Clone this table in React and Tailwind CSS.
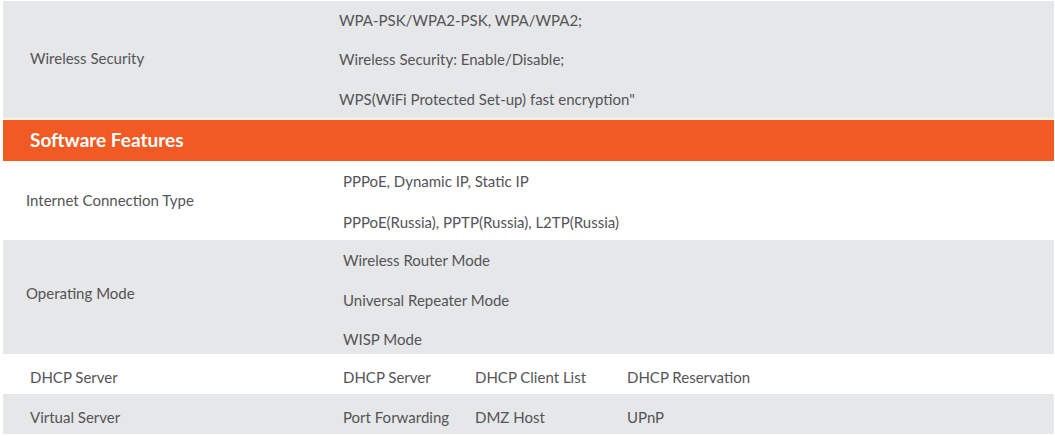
import React from "react";

function Row({ bg, label, labelPad = "pl-[27px]", valuePad = "pl-0", lines, h }) {
    return (
        <div className={`flex ${bg}`}>
            <div className={`w-[336px] shrink-0 flex items-center whitespace-nowrap ${labelPad}`}>
                {label}
            </div>
            <div className={`flex flex-col ${valuePad}`}>
                {lines.map((l, i) => (
                    <div key={i} className={`flex items-center whitespace-nowrap ${h[i]}`}>
                        {l}
                    </div>
                ))}
            </div>
        </div>
    );
}

export default function App() {
    return (
        <div className="w-[1055px] h-[436px] bg-white pt-px pl-[3px] pr-px text-[15px] text-[#545457] font-['Lato','Open_Sans',sans-serif]">
            {/* Hardware: wireless security */}
            <Row
                bg="bg-[#e6e7e8]"
                label="Wireless Security"
                labelPad="pl-[27px] pb-[2px]"
                lines={[
                    "WPA-PSK/WPA2-PSK, WPA/WPA2;",
                    "Wireless Security: Enable/Disable;",
                    'WPS(WiFi Protected Set-up) fast encryption"',
                ]}
                h={["h-[39px]", "h-[39px]", "h-[39px] pt-[2px]"]}
            />
            <div className="h-[2px] bg-[#fbf4e6]"></div>

            {/* Section header */}
            <div className="h-[41px] bg-[#f15a22] flex items-center pl-[27px] text-white font-bold text-[19px]">
                Software Features
            </div>

            <Row
                bg="bg-white"
                label="Internet Connection Type"
                labelPad="pl-[23px]"
                valuePad="pl-[4px]"
                lines={[
                    "PPPoE, Dynamic IP, Static IP",
                    "PPPoE(Russia), PPTP(Russia), L2TP(Russia)",
                ]}
                h={["h-[41px]", "h-[38px] pt-[2px]"]}
            />

            <Row
                bg="bg-[#e6e7e8]"
                label="Operating Mode"
                labelPad="pl-[23px] pb-[8px]"
                valuePad="pl-[4px]"
                lines={["Wireless Router Mode", "Universal Repeater Mode", "WISP Mode"]}
                h={["h-[40px]", "h-[40px]", "h-[34px] pt-[4px]"]}
            />

            {/* DHCP */}
            <div className="flex h-[40px] bg-white items-center pt-[7px]">
                <div className="w-[340px] shrink-0 pl-[27px]">DHCP Server</div>
                <div className="w-[132px] shrink-0">DHCP Server</div>
                <div className="w-[152px] shrink-0">DHCP Client List</div>
                <div>DHCP Reservation</div>
            </div>

            {/* Virtual server */}
            <div className="flex h-[40px] bg-[#e6e7e8] items-center pt-[7px]">
                <div className="w-[340px] shrink-0 pl-[27px]">Virtual Server</div>
                <div className="w-[132px] shrink-0">Port Forwarding</div>
                <div className="w-[152px] shrink-0">DMZ Host</div>
                <div>UPnP</div>
            </div>
        </div>
    );
}
